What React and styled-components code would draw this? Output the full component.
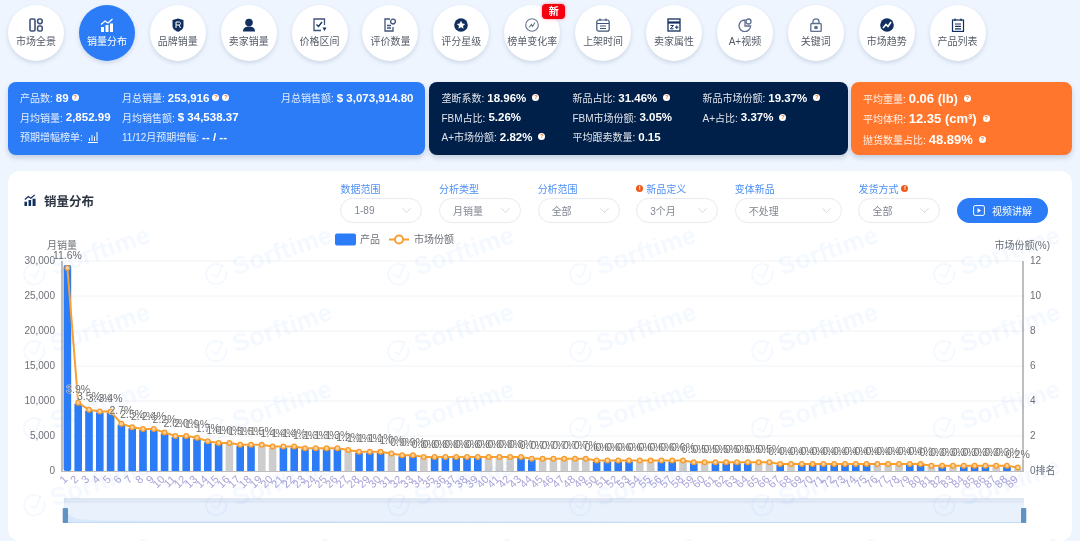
import React from "react";
import styled, { createGlobalStyle } from "styled-components";
import { ChevronDown } from "lucide-react";

const GlobalStyle = createGlobalStyle`
  html, body {
    margin: 0;
    padding: 0;
    height: 541px;
    overflow: hidden;
    background: #eef5ff;
    font-family: "Liberation Sans", "Noto Sans CJK SC", sans-serif;
  }
`;

const Page = styled.div`
  width: 1080px;
  height: 541px;
  overflow: hidden;
  filter: blur(0.3px);
`;

const Nav = styled.div`
  display: flex;
  gap: 14.9px;
  padding: 5px 8px 21px;
`;

const NavItem = styled.div`
  position: relative;
  flex: none;
  width: 56px;
  height: 56px;
  border-radius: 50%;
  display: flex;
  flex-direction: column;
  align-items: center;
  padding-top: 13px;
  box-sizing: border-box;
  background: ${(p) => (p.$active ? "#2b7cf6" : "#fff")};
  color: ${(p) => (p.$active ? "#fff" : "#555b66")};
  box-shadow: 0 2px 4px rgba(40, 60, 100, 0.16);
`;

const NavIcon = styled.svg`
  width: 14px;
  height: 14px;
  flex: none;
`;

const NavLabel = styled.span`
  margin-top: 2px;
  font-size: 10px;
  line-height: 16px;
  white-space: nowrap;
`;

const NewBadge = styled.span`
  position: absolute;
  top: -1px;
  right: -5px;
  width: 23px;
  height: 15px;
  border-radius: 4px;
  background: #f5000f;
  color: #fff;
  font-size: 10px;
  font-weight: 700;
  line-height: 15px;
  text-align: center;
  box-shadow: 0 0 3px rgba(245, 0, 15, 0.5);
`;

const Cards = styled.div`
  display: flex;
  gap: 3.5px;
  padding: 0 8px;
  margin-bottom: 16px;
`;

const StatCard = styled.div`
  flex: none;
  box-sizing: border-box;
  width: ${(p) => p.$width}px;
  height: 73px;
  padding: 6px 0 0 ${(p) => p.$left}px;
  border-radius: 8px;
  background: ${(p) => p.$bg};
  color: #fff;
  box-shadow: 0 3px 5px rgba(40, 60, 100, 0.2);
  display: grid;
  grid-template-columns: ${(p) => p.$cols};
  grid-auto-rows: ${(p) => p.$row || 19.5}px;
`;

const Stat = styled.div`
  display: flex;
  align-items: center;
  white-space: nowrap;
  font-size: 10px;
  color: rgba(255, 255, 255, 0.88);
`;

const StatValue = styled.b`
  margin-left: 3px;
  font-size: ${(p) => p.$size || 11.5}px;
  font-weight: 700;
  color: #fff;
`;

const Hint = styled.span`
  flex: none;
  width: 7px;
  height: 7px;
  margin-left: ${(p) => p.$gap || 3}px;
  border-radius: 50%;
  background: #fff;
  color: #f07a30;
  font-size: 6px;
  font-weight: 700;
  line-height: 7px;
  text-align: center;
`;

const Panel = styled.div`
  position: relative;
  width: 1064px;
  height: 370px;
  margin: 0 8px;
  border-radius: 12px;
  background: #fff;
  overflow: hidden;
`;

const PanelHead = styled.div`
  display: flex;
  justify-content: space-between;
  align-items: flex-start;
  height: 55px;
  box-sizing: border-box;
  padding: 10px 24px 0 16px;
`;

const Title = styled.div`
  display: flex;
  align-items: center;
  gap: 8px;
  height: 38px;
  font-size: 12.5px;
  font-weight: 700;
  color: #2c3440;
`;

const TitleIcon = styled.svg`
  width: 12px;
  height: 12px;
`;

const Filters = styled.div`
  display: flex;
  align-items: flex-end;
  gap: 16.6px;
`;

const Filter = styled.div`
  display: flex;
  flex-direction: column;
  width: ${(p) => p.$width || 82}px;
`;

const FilterLabel = styled.div`
  display: flex;
  align-items: center;
  gap: 3px;
  height: 14px;
  margin-bottom: 3px;
  font-size: 10px;
  color: #4d90f5;
`;

const Warn = styled.span`
  width: 7px;
  height: 7px;
  border-radius: 50%;
  background: #ee5a1a;
  color: #fff;
  font-size: 6px;
  font-weight: 700;
  line-height: 7px;
  text-align: center;
`;

const Select = styled.div`
  display: flex;
  align-items: center;
  justify-content: space-between;
  box-sizing: border-box;
  height: 25px;
  padding: 0 7px 0 13px;
  border: 1px solid #e8eaee;
  border-radius: 13px;
  font-size: 10px;
  color: #808690;
  svg {
    color: #bcc1c9;
  }
`;

const VideoButton = styled.div`
  display: flex;
  align-items: center;
  justify-content: center;
  gap: 7px;
  width: 91px;
  height: 25px;
  border-radius: 13px;
  background: #2b7cf6;
  color: #fff;
  font-size: 10px;
`;

const ChartSvg = styled.svg`
  display: block;
  width: 1064px;
  height: 315px;
`;

const AxisText = styled.text`
  font-size: ${(p) => p.$size || 10}px;
  fill: #6c6f76;
  text-anchor: ${(p) => p.$anchor || "start"};
`;

const PctText = styled.text`
  font-size: 10.5px;
  fill: #6a6a6a;
  text-anchor: middle;
  stroke: rgba(255, 255, 255, 0.6);
  stroke-width: 1.2px;
  paint-order: stroke;
`;

const CatText = styled.text`
  font-size: 11px;
  fill: #a9a3d8;
  text-anchor: end;
`;

const Watermarks = styled.div`
  position: absolute;
  top: 46px;
  left: -13px;
  display: grid;
  grid-template-columns: repeat(7, 182px);
  grid-auto-rows: 77px;
  pointer-events: none;
`;

const Mark = styled.div`
  display: flex;
  align-items: center;
  justify-content: center;
  gap: 6px;
  transform: rotate(-19deg);
  color: rgba(43, 124, 246, 0.05);
  font-size: 25px;
  font-weight: 700;
  letter-spacing: 0.3px;
  svg {
    width: 24px;
    height: 24px;
  }
`;

const NAVY = "#12305f";
const SLATE = "#3f5479";

const navItems = [
  {
    label: "市场全景",
    icon: (
      <g fill="none" stroke={SLATE} strokeWidth="1.6">
        <rect x="1" y="1" width="5" height="12" rx="1.2" />
        <rect x="8.6" y="1" width="4.6" height="4.6" rx="2" />
        <rect x="8.6" y="8" width="4.6" height="5" rx="1.4" />
      </g>
    ),
  },
  {
    label: "销量分布",
    active: true,
    icon: (
      <g fill="#fff">
        <rect x="1" y="9" width="3" height="5" />
        <rect x="5.5" y="7" width="3" height="7" />
        <rect x="10" y="5.5" width="3" height="8.5" />
        <path d="M1 6.5 L5 3 L8 5 L12.5 1" fill="none" stroke="#fff" strokeWidth="1.3" />
      </g>
    ),
  },
  {
    label: "品牌销量",
    icon: (
      <g>
        <path d="M7 0.5 L12.5 2 V8 C12.5 11 9.5 12.8 7 13.8 C4.5 12.8 1.5 11 1.5 8 V2 Z" fill={NAVY} />
        <path d="M5 10 V4 H8 C10 4 10 7 8 7 H5 M8 7 L9.5 10" fill="none" stroke="#fff" strokeWidth="1" />
      </g>
    ),
  },
  {
    label: "卖家销量",
    icon: (
      <g fill={NAVY}>
        <circle cx="7" cy="4.5" r="3.8" />
        <path d="M1 13.5 C1 9.5 4 8.5 7 8.5 C10 8.5 13 9.5 13 13.5 Z" />
      </g>
    ),
  },
  {
    label: "价格区间",
    icon: (
      <g fill="none" stroke={SLATE} strokeWidth="1.3">
        <path d="M11.5 7 V1 H1 V12.5 H8" />
        <path d="M3.5 6.5 L5.5 8.5 L9 4" stroke={NAVY} />
        <path d="M9.5 9.5 H13.5 L11.5 13 Z" fill={NAVY} stroke="none" />
      </g>
    ),
  },
  {
    label: "评价数量",
    icon: (
      <g fill="none" stroke={SLATE} strokeWidth="1.3">
        <path d="M7 1 H2 V13 H10 V9" />
        <circle cx="10" cy="3.6" r="2.4" />
        <path d="M4 7.5 H8 M4 10 H8" />
      </g>
    ),
  },
  {
    label: "评分星级",
    icon: (
      <g>
        <circle cx="7" cy="7" r="6.8" fill={NAVY} />
        <path d="M7 2.8 L8.3 5.6 L11.2 5.9 L9 7.9 L9.6 10.8 L7 9.3 L4.4 10.8 L5 7.9 L2.8 5.9 L5.7 5.6 Z" fill="#fff" />
      </g>
    ),
  },
  {
    label: "榜单变化率",
    badge: true,
    icon: (
      <g fill="none" stroke="#66758f" strokeWidth="1.1">
        <circle cx="7" cy="7" r="6.3" />
        <path d="M4 9.5 L6.5 6.5 L7.5 8.5 L10 4.5" />
      </g>
    ),
  },
  {
    label: "上架时间",
    icon: (
      <g fill="none" stroke={SLATE} strokeWidth="1.2">
        <rect x="0.8" y="2" width="12.4" height="11.2" rx="2" />
        <path d="M1 5.5 H13 M4 0.5 V3 M10 0.5 V3 M4 8 H10 M4 10.5 H10" />
      </g>
    ),
  },
  {
    label: "卖家属性",
    icon: (
      <g fill="none" stroke={NAVY} strokeWidth="1.3">
        <rect x="1" y="1" width="12" height="12" />
        <path d="M1 4.5 H13" strokeWidth="2.2" />
        <path d="M3.5 7.5 H6.5 L3.5 10.8 H6.5 M8 9.2 H11.5 M9.8 7.5 V11" strokeWidth="1" />
      </g>
    ),
  },
  {
    label: "A+视频",
    icon: (
      <g fill="none" stroke="#5d6f8e" strokeWidth="1.3">
        <path d="M7 2 A5.8 5.8 0 1 0 12.6 8 H7 Z" />
        <circle cx="10.5" cy="3.5" r="2.5" />
      </g>
    ),
  },
  {
    label: "关键词",
    icon: (
      <g fill="none" stroke="#5d6f8e" strokeWidth="1.3">
        <rect x="1.8" y="5.5" width="10.4" height="8" rx="1" />
        <path d="M4 5.5 V3.4 C4 0 10 0 10 3.4 V5.5" />
        <circle cx="7" cy="9.5" r="1.2" fill="#5d6f8e" />
      </g>
    ),
  },
  {
    label: "市场趋势",
    icon: (
      <g>
        <circle cx="7" cy="7" r="6.8" fill={NAVY} />
        <path d="M3 10 L6 6.5 L8 8.5 L11 4" fill="none" stroke="#fff" strokeWidth="1.7" />
      </g>
    ),
  },
  {
    label: "产品列表",
    icon: (
      <g fill="none" stroke={NAVY} strokeWidth="1.2">
        <rect x="1.5" y="2" width="11" height="11.4" />
        <path d="M4 0.5 V3 M10 0.5 V3 M4 6 H10 M4 8.4 H10 M4 10.8 H10" />
      </g>
    ),
  },
];

const shares = [
  11.6, 3.9, 3.5, 3.4, 3.4, 2.7, 2.5, 2.4, 2.4, 2.2, 2.0, 2.0, 1.9, 1.7, 1.6, 1.6, 1.5, 1.5, 1.5,
  1.4, 1.4, 1.4, 1.3, 1.3, 1.3, 1.3, 1.2, 1.1, 1.1, 1.1, 1.0, 0.9, 0.9,
  ...Array(10).fill(0.8),
  ...Array(6).fill(0.7),
  ...Array(9).fill(0.6),
  ...Array(8).fill(0.5),
  ...Array(14).fill(0.4),
  ...Array(8).fill(0.3),
  0.2,
];

const greyBars = new Set([
  16, 19, 20, 27, 31, 34, 40, 41, 42, 45, 46, 47, 48, 49, 54, 55, 58, 60, 65, 66, 68, 76, 77, 78,
  81, 83, 87, 89,
]);

const AXIS_LEFT = 62;
const AXIS_RIGHT = 1023;
const AXIS_BOTTOM = 471;
const STEP = 10.8;
const catX = (i) => 67.4 + STEP * i;
const shareY = (v) => AXIS_BOTTOM - v * 17.5;
const barTop = (v, i) => (i === 0 ? shareY(v) - 3 : shareY(v) + 1);
const linePoints = shares.map((v, i) => `${catX(i)},${shareY(v)}`).join(" ");
const sliderArea = "M64 522 L68 514 L76 519 L100 520.5 L200 521 L1024 522 Z";

function Chart() {
  return (
    <ChartSvg viewBox="8 226 1064 315">
      {[0, 1, 2, 3, 4, 5, 6].map((n) => (
        <g key={n}>
          {n > 0 && (
            <line x1={AXIS_LEFT} x2={AXIS_RIGHT} y1={AXIS_BOTTOM - n * 35} y2={AXIS_BOTTOM - n * 35} stroke="#f0f2f6" />
          )}
          <AxisText x="55" y={AXIS_BOTTOM - n * 35 + 3} $anchor="end">
            {n === 0 ? "0" : (n * 5000).toLocaleString("en-US")}
          </AxisText>
          {n > 0 && (
            <AxisText x="1030" y={AXIS_BOTTOM - n * 35 + 3}>
              {n * 2}
            </AxisText>
          )}
        </g>
      ))}

      <AxisText x="62" y="249" $anchor="middle">月销量</AxisText>
      <AxisText x="1050" y="249" $anchor="end">市场份额(%)</AxisText>
      <AxisText x="1030" y="474">0排名</AxisText>

      <rect x="335" y="233.5" width="21" height="12" rx="2" fill="#2b7cf6" />
      <AxisText x="360" y="243">产品</AxisText>
      <line x1="389" x2="409" y1="239.5" y2="239.5" stroke="#f7a035" strokeWidth="2" />
      <circle cx="399" cy="239.5" r="4" fill="#fff" stroke="#f7a035" strokeWidth="2" />
      <AxisText x="414" y="243">市场份额</AxisText>

      {shares.map((v, i) => (
        <rect
          key={i}
          x={catX(i) - 3.8}
          y={barTop(v, i)}
          width="7.6"
          height={AXIS_BOTTOM - barTop(v, i)}
          rx={i === 0 ? 2 : 0}
          fill={greyBars.has(i + 1) ? "#cdcdcd" : "#2b7cf6"}
        />
      ))}

      <line x1={AXIS_LEFT} x2={AXIS_LEFT} y1="261" y2={AXIS_BOTTOM + 1} stroke="#a8a8a8" strokeWidth="1.5" />
      <line x1={AXIS_RIGHT} x2={AXIS_RIGHT} y1="261" y2={AXIS_BOTTOM + 1} stroke="#a8a8a8" strokeWidth="1.5" />
      <line x1={AXIS_LEFT} x2={AXIS_RIGHT} y1={AXIS_BOTTOM + 0.5} y2={AXIS_BOTTOM + 0.5} stroke="#bdbdbd" />

      <polyline points={linePoints} fill="none" stroke="#f9a12e" strokeWidth="2" />
      {shares.map((v, i) => (
        <circle key={i} cx={catX(i)} cy={shareY(v)} r="2.3" fill="#ffd39a" stroke="#f79a2b" strokeWidth="1.3" />
      ))}
      {shares.map((v, i) => (
        <PctText key={i} x={catX(i)} y={shareY(v) - 9.5}>
          {v.toFixed(1)}%
        </PctText>
      ))}
      {shares.map((v, i) => (
        <CatText key={i} transform={`translate(${catX(i) + 1} ${AXIS_BOTTOM + 9}) rotate(-45)`}>
          {i + 1}
        </CatText>
      ))}

      <rect x="64" y="498" width="960" height="5" fill="#dfe7f5" />
      <rect x="64" y="503" width="960" height="20" fill="#e9f2fc" />
      <path d={sliderArea} fill="#d8e7fa" />
      <line x1="64" x2="1024" y1="522.5" y2="522.5" stroke="#c5daf5" />
      <rect x="62.7" y="508" width="5.3" height="15" rx="1" fill="#5f93c2" />
      <rect x="1021" y="508" width="5.3" height="15" rx="1" fill="#5f93c2" />
    </ChartSvg>
  );
}

const filters = [
  { label: "数据范围", value: "1-89" },
  { label: "分析类型", value: "月销量" },
  { label: "分析范围", value: "全部" },
  { label: "新品定义", value: "3个月", warnBefore: true },
  { label: "变体新品", value: "不处理", width: 107 },
  { label: "发货方式", value: "全部", warnAfter: true },
];

const App = () => (
  <Page>
    <GlobalStyle />
    <Nav>
      {navItems.map(({ label, icon, active, badge }) => (
        <NavItem key={label} $active={active}>
          <NavIcon viewBox="0 0 14 14">{icon}</NavIcon>
          <NavLabel>{label}</NavLabel>
          {badge && <NewBadge>新</NewBadge>}
        </NavItem>
      ))}
    </Nav>

    <Cards>
      <StatCard $width={417} $left={12} $bg="#2b7cf6" $cols="102px 159px 1fr">
        <Stat>产品数:<StatValue>89</StatValue><Hint>?</Hint></Stat>
        <Stat>月总销量:<StatValue>253,916</StatValue><Hint>?</Hint><Hint>?</Hint></Stat>
        <Stat>月总销售额:<StatValue>$ 3,073,914.80</StatValue></Stat>
        <Stat>月均销量:<StatValue>2,852.99</StatValue></Stat>
        <Stat>月均销售额:<StatValue>$ 34,538.37</StatValue></Stat>
        <Stat />
        <Stat>
          预期增幅榜单:
          <svg width="12" height="12" viewBox="0 0 12 12" style={{ marginLeft: 4 }}>
            <path d="M1 11.5 H11 M2.5 10 V7 M5 10 V4 M7.5 10 V5.5 M10 10 V1" stroke="#fff" fill="none" />
          </svg>
        </Stat>
        <Stat>11/12月预期增幅:<StatValue>-- / --</StatValue></Stat>
      </StatCard>

      <StatCard $width={419} $left={13} $bg="#001f49" $cols="131px 130px 1fr">
        <Stat>垄断系数:<StatValue>18.96%</StatValue><Hint $gap={6}>?</Hint></Stat>
        <Stat>新品占比:<StatValue>31.46%</StatValue><Hint $gap={6}>?</Hint></Stat>
        <Stat>新品市场份额:<StatValue>19.37%</StatValue><Hint $gap={6}>?</Hint></Stat>
        <Stat>FBM占比:<StatValue>5.26%</StatValue></Stat>
        <Stat>FBM市场份额:<StatValue>3.05%</StatValue></Stat>
        <Stat>A+占比:<StatValue>3.37%</StatValue><Hint $gap={6}>?</Hint></Stat>
        <Stat>A+市场份额:<StatValue>2.82%</StatValue><Hint $gap={6}>?</Hint></Stat>
        <Stat>平均跟卖数量:<StatValue>0.15</StatValue></Stat>
      </StatCard>

      <StatCard $width={221} $left={12} $row={20.5} $bg="#ff762c" $cols="1fr">
        <Stat>平均重量:<StatValue $size={13}>0.06 (lb)</StatValue><Hint $gap={6}>?</Hint></Stat>
        <Stat>平均体积:<StatValue $size={13}>12.35 (cm³)</StatValue><Hint $gap={6}>?</Hint></Stat>
        <Stat>抛货数量占比:<StatValue $size={13}>48.89%</StatValue><Hint $gap={6}>?</Hint></Stat>
      </StatCard>
    </Cards>

    <Panel>
      <PanelHead>
        <Title>
          <TitleIcon viewBox="0 0 14 14">
            <g fill={NAVY}>
              <rect x="0.5" y="9" width="3" height="5" />
              <rect x="5.3" y="7" width="3" height="7" />
              <rect x="10" y="5.5" width="3.5" height="8.5" />
              <path d="M1 6.5 L5 3 L8 5 L12.5 1" fill="none" stroke={NAVY} strokeWidth="1.5" />
            </g>
          </TitleIcon>
          销量分布
        </Title>
        <Filters>
          {filters.map(({ label, value, width, warnBefore, warnAfter }) => (
            <Filter key={label} $width={width}>
              <FilterLabel>
                {warnBefore && <Warn>!</Warn>}
                {label}
                {warnAfter && <Warn>!</Warn>}
              </FilterLabel>
              <Select>
                {value}
                <ChevronDown size={15} strokeWidth={1} />
              </Select>
            </Filter>
          ))}
          <VideoButton>
            <svg width="12" height="11" viewBox="0 0 12 11">
              <rect x="0.6" y="0.6" width="10.8" height="9.8" rx="1.5" fill="none" stroke="#fff" strokeWidth="1" />
              <path d="M4.5 3 L8 5.5 L4.5 8 Z" fill="#fff" />
            </svg>
            视频讲解
          </VideoButton>
        </Filters>
      </PanelHead>

      <Chart />

      <Watermarks>
        {Array.from({ length: 35 }, (_, i) => (
          <Mark key={i}>
            <svg viewBox="0 0 26 26" fill="none" stroke="currentColor" strokeWidth="2">
              <path d="M22 7 A11 11 0 1 0 24 13" />
              <path d="M8 12 L13 17 L23 6" />
            </svg>
            Sorftime
          </Mark>
        ))}
      </Watermarks>
    </Panel>
  </Page>
);

export default App;
